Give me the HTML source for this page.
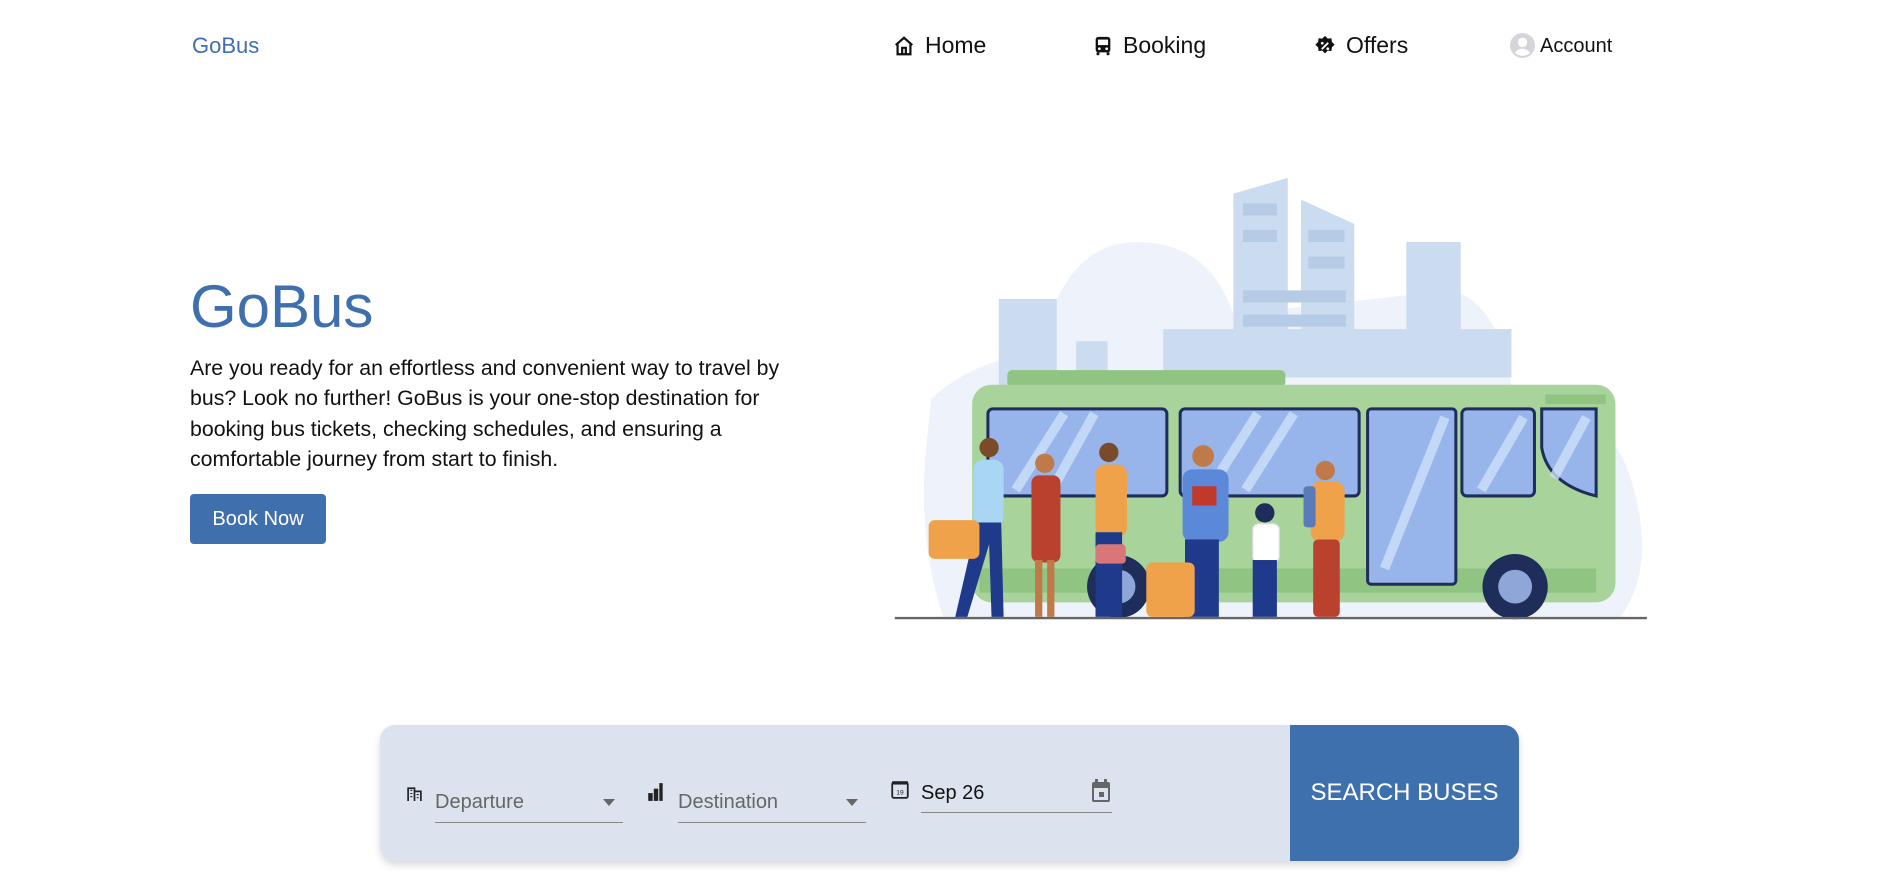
<!DOCTYPE html>
<html><head><meta charset="utf-8"><style>
*{margin:0;padding:0;box-sizing:border-box}
body{width:1896px;height:877px;background:#fff;font-family:"Liberation Sans",sans-serif;position:relative;overflow:hidden;color:#111}
.a{position:absolute;white-space:nowrap}
.nav{font-size:23px;color:#111;top:32px}
</style></head><body>
<svg class="a" style="left:0;top:0" width="1896" height="877" viewBox="0 0 1568 725">
<path d="M770 330 Q800 300 860 290 Q880 200 940 200 Q1000 200 1020 260 L1200 240 Q1240 250 1250 320 Q1330 330 1350 400 Q1370 470 1340 510 L780 510 Q760 450 765 380 Z" fill="#eef2fa"/>
<g fill="#cbdcf0">
<path d="M1020 160 L1065 147 L1065 300 L1020 300Z"/>
<path d="M1076 165 L1120 185 L1120 300 L1076 300Z"/>
<rect x="1163" y="200" width="45" height="100"/>
<rect x="962" y="272" width="288" height="40"/>
<rect x="826" y="247" width="48" height="75"/>
<rect x="890" y="282" width="26" height="30"/>
</g>
<g fill="#b5cbe6"><rect x="1028" y="168" width="28" height="10"/><rect x="1028" y="190" width="28" height="10"/><rect x="1082" y="190" width="30" height="10"/><rect x="1082" y="212" width="30" height="10"/><rect x="1028" y="240" width="85" height="10"/><rect x="1028" y="260" width="85" height="10"/></g>
<rect x="833" y="306" width="230" height="14" rx="4" fill="#8fc483"/>
<rect x="804" y="318" width="532" height="180" rx="16" fill="#a8d39b"/>
<rect x="1278" y="326" width="50" height="8" fill="#8fc483"/>
<rect x="810" y="470" width="510" height="20" fill="#8fc483"/>
<g fill="#97b5ea" stroke="#1f2d5a" stroke-width="2.5">
<rect x="817" y="338" width="148" height="72" rx="4"/>
<rect x="976" y="338" width="148" height="72" rx="4"/>
<rect x="1131" y="338" width="73" height="145" rx="3"/>
<rect x="1209" y="338" width="60" height="72" rx="4"/>
<path d="M1275 338 L1320 338 L1320 410 Q1280 400 1275 370Z"/>
</g>
<g stroke="#cfe0fa" stroke-width="8" opacity=".8"><line x1="840" y1="405" x2="880" y2="342"/><line x1="870" y1="405" x2="905" y2="342"/><line x1="1000" y1="405" x2="1040" y2="342"/><line x1="1030" y1="405" x2="1070" y2="342"/><line x1="1145" y1="470" x2="1195" y2="345"/><line x1="1225" y1="405" x2="1260" y2="345"/><line x1="1285" y1="395" x2="1312" y2="345"/></g>
<circle cx="925" cy="485" r="26" fill="#1f2d5a"/><circle cx="925" cy="485" r="14" fill="#8fa7d8"/>
<circle cx="1253" cy="485" r="27" fill="#1f2d5a"/><circle cx="1253" cy="485" r="14" fill="#8fa7d8"/>
<line x1="740" y1="511" x2="1362" y2="511" stroke="#666" stroke-width="2"/>
<g>
<circle cx="818" cy="370" r="8" fill="#7a4a2a"/><rect x="805" y="380" width="25" height="55" rx="8" fill="#a9d6f2"/><path d="M808 432 L790 510 L800 510 L818 450 L820 510 L830 510 L828 432Z" fill="#1f3a8a"/><rect x="768" y="430" width="42" height="32" rx="5" fill="#f0a24a"/>
<circle cx="864" cy="383" r="8" fill="#c07a4a"/><rect x="853" y="393" width="24" height="72" rx="6" fill="#b9412e"/><rect x="856" y="463" width="6" height="47" fill="#c07a4a"/><rect x="866" y="463" width="6" height="47" fill="#c07a4a"/>
<circle cx="917" cy="374" r="8" fill="#7a4a2a"/><rect x="906" y="384" width="26" height="60" rx="8" fill="#f0a24a"/><rect x="906" y="440" width="22" height="70" fill="#1f3a8a"/><rect x="906" y="450" width="25" height="16" rx="3" fill="#d9767a"/>
<circle cx="995" cy="377" r="9" fill="#c07a4a"/><rect x="978" y="388" width="38" height="60" rx="8" fill="#5b88d8"/><rect x="980" y="446" width="28" height="64" fill="#1f3a8a"/><rect x="948" y="465" width="40" height="45" rx="5" fill="#f0a24a"/><rect x="986" y="402" width="20" height="16" fill="#c0392b"/>
<circle cx="1046" cy="424" r="8" fill="#1f2d5a"/><rect x="1036" y="433" width="22" height="32" rx="5" fill="#fff" stroke="#ddd"/><rect x="1036" y="463" width="20" height="47" fill="#1f3a8a"/>
<circle cx="1096" cy="389" r="8" fill="#c07a4a"/><rect x="1084" y="398" width="28" height="50" rx="8" fill="#f0a24a"/><rect x="1086" y="446" width="22" height="64" rx="4" fill="#b9412e"/><rect x="1078" y="402" width="10" height="34" rx="3" fill="#5b7bb8"/>
</g>
</svg>
<div class="a" style="left:192px;top:33px;font-size:22px;color:#3f6fad">GoBus</div>
<svg class="a" style="left:893px;top:35px" width="22" height="22" viewBox="0 0 24 24"><path d="M3 11 L12 3 L21 11 M5 9 V21 H19 V9 M10 21 V14 H14 V21" fill="none" stroke="#111" stroke-width="2.4"/></svg>
<div class="a nav" style="left:925px">Home</div>
<svg class="a" style="left:1092px;top:35px" width="22" height="22" viewBox="0 0 24 24"><rect x="4" y="2" width="16" height="17" rx="3" fill="#111"/><rect x="6.5" y="5" width="11" height="6" fill="#fff"/><circle cx="8" cy="15" r="1.5" fill="#fff"/><circle cx="16" cy="15" r="1.5" fill="#fff"/><rect x="5" y="19" width="3" height="3" fill="#111"/><rect x="16" y="19" width="3" height="3" fill="#111"/></svg>
<div class="a nav" style="left:1123px">Booking</div>
<svg class="a" style="left:1314px;top:35px" width="22" height="22" viewBox="0 0 24 24"><path d="M12 1l3 3 4-.5.5 4 3 3-3 3-.5 4-4-.5-3 3-3-3-4 .5-.5-4-3-3 3-3 .5-4 4 .5z" fill="#111"/><path d="M8.5 15.5 L15.5 8.5" stroke="#fff" stroke-width="2"/><circle cx="9" cy="9" r="1.5" fill="#fff"/><circle cx="15" cy="15" r="1.5" fill="#fff"/></svg>
<div class="a nav" style="left:1346px">Offers</div>
<svg class="a" style="left:1510px;top:33px" width="25" height="25" viewBox="0 0 24 24"><circle cx="12" cy="12" r="12" fill="#d3d5da"/><circle cx="12" cy="9" r="4.5" fill="#fff"/><path d="M4.5 19 Q12 11 19.5 19 Q12 25 4.5 19Z" fill="#fff"/></svg>
<div class="a" style="left:1540px;top:35px;font-size:20px">Account</div>

<div class="a" style="left:190px;top:272px;font-size:60px;color:#3f6fad">GoBus</div>
<div class="a" style="left:190px;top:353px;font-size:21.3px;line-height:30.4px;white-space:nowrap;color:#111">Are you ready for an effortless and convenient way to travel by<br>bus? Look no further! GoBus is your one-stop destination for<br>booking bus tickets, checking schedules, and ensuring a<br>comfortable journey from start to finish.</div>
<div class="a" style="left:190px;top:494px;width:136px;height:50px;background:#3f6fad;border-radius:4px;color:#fff;font-size:20px;line-height:50px;text-align:center">Book Now</div>

<div class="a" style="left:380px;top:725px;width:1139px;height:136px;background:#dce3ef;border-radius:15px;box-shadow:0 4px 8px rgba(0,0,0,.15);overflow:hidden">
<div class="a" style="left:910px;top:0;width:229px;height:136px;background:#3f70ae;color:#fff;font-size:24px;line-height:136px;text-align:center">SEARCH BUSES</div>
<svg class="a" style="left:26px;top:60px" width="17" height="17" viewBox="0 0 16 16"><path d="M2 15V3h6v12M8 6h6v9" fill="none" stroke="#222" stroke-width="1.6"/><path d="M4 5h2M4 8h2M4 11h2M10 9h2M10 12h2" stroke="#222"/></svg>
<div class="a" style="left:55px;top:66px;width:188px;height:32px;border-bottom:1px solid #888;font-size:20px;color:#666">Departure<span style="position:absolute;right:8px;top:8px;border:6px solid transparent;border-top:7px solid #666"></span></div>
<svg class="a" style="left:267px;top:57px" width="18" height="20" viewBox="0 0 16 18"><rect x="1" y="10" width="4" height="7" fill="#222"/><rect x="6" y="6" width="4" height="11" fill="#222"/><rect x="11" y="1" width="3" height="16" fill="#222"/></svg>
<div class="a" style="left:298px;top:66px;width:188px;height:32px;border-bottom:1px solid #888;font-size:20px;color:#666">Destination<span style="position:absolute;right:8px;top:8px;border:6px solid transparent;border-top:7px solid #666"></span></div>
<svg class="a" style="left:511px;top:54px" width="18" height="20" viewBox="0 0 16 18"><rect x="1" y="3" width="14" height="14" rx="1.5" fill="none" stroke="#222" stroke-width="1.6"/><rect x="1" y="2" width="14" height="3" fill="#222"/><text x="8" y="14" font-size="6" text-anchor="middle" fill="#222" font-family="Liberation Sans">19</text></svg>
<div class="a" style="left:541px;top:57px;width:191px;height:31px;border-bottom:1px solid #888;font-size:20px;color:#111">Sep 26</div>
<svg class="a" style="left:710px;top:53px" width="22" height="26" viewBox="0 0 22 26"><rect x="2" y="4" width="18" height="20" rx="2" fill="#666"/><rect x="5" y="1" width="3" height="5" fill="#666"/><rect x="14" y="1" width="3" height="5" fill="#666"/><rect x="4" y="10" width="14" height="12" fill="#dce3ef"/><rect x="9" y="14" width="5" height="5" fill="#666"/></svg>
</div>
</body></html>
